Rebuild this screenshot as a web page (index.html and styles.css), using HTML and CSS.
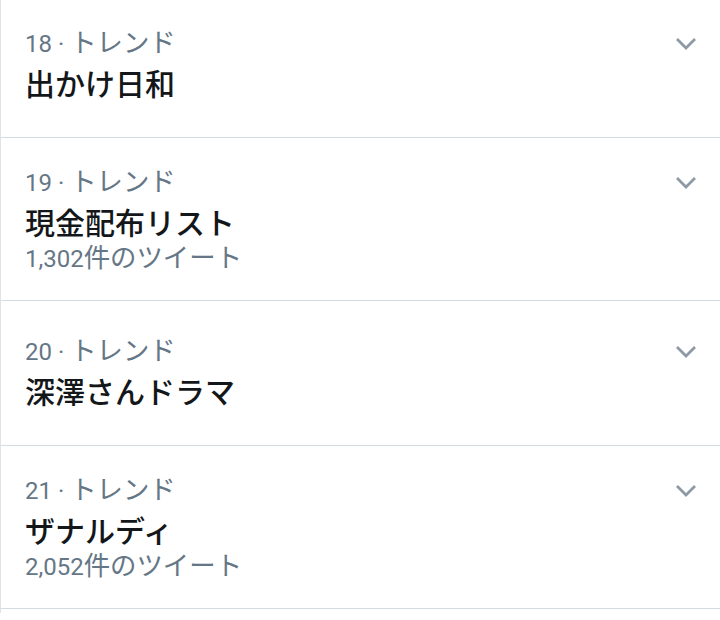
FILE: index.html
```html
<!DOCTYPE html>
<html lang="ja">
<head>
    <meta charset="UTF-8">
    <meta name="viewport" content="width=device-width, initial-scale=1.0">
    <title>トレンド</title>
    <link rel="stylesheet" href="styles.css">
</head>
<body>
    <div class="trend-list">
        <div class="trend">
            <div class="trend-meta">
                <span>18 · <span class="ja">トレンド</span></span>
                <svg class="caret" width="22" height="14" viewBox="0 0 22 14"><path d="M2 2 L11 11 L20 2"/></svg>
            </div>
            <div class="trend-name">出かけ日和</div>
        </div>

        <div class="trend">
            <div class="trend-meta">
                <span>19 · <span class="ja">トレンド</span></span>
                <svg class="caret" width="22" height="14" viewBox="0 0 22 14"><path d="M2 2 L11 11 L20 2"/></svg>
            </div>
            <div class="trend-name">現金配布リスト</div>
            <div class="trend-count">1,302<span class="ja">件のツイート</span></div>
        </div>

        <div class="trend">
            <div class="trend-meta">
                <span>20 · <span class="ja">トレンド</span></span>
                <svg class="caret" width="22" height="14" viewBox="0 0 22 14"><path d="M2 2 L11 11 L20 2"/></svg>
            </div>
            <div class="trend-name">深澤さんドラマ</div>
        </div>

        <div class="trend">
            <div class="trend-meta">
                <span>21 · <span class="ja">トレンド</span></span>
                <svg class="caret" width="22" height="14" viewBox="0 0 22 14"><path d="M2 2 L11 11 L20 2"/></svg>
            </div>
            <div class="trend-name">ザナルディ</div>
            <div class="trend-count">2,052<span class="ja">件のツイート</span></div>
        </div>
    </div>
</body>
</html>
```

FILE: styles.css
```css
body {
    margin: 0;
    padding: 0;
    background-color: #ffffff;
    font-family: Roboto, "Noto Sans CJK JP", sans-serif;
    color: #14171a;
    overflow: hidden;
}

.trend-list {
    margin-top: -7px;
    border-left: 1px solid #dde3e8;
    min-height: 100vh;
}

/* each row: two-line rows sit at the min height, text centred */
.trend {
    display: flex;
    flex-direction: column;
    justify-content: center;
    box-sizing: border-box;
    min-height: 145px;
    padding: 28px 24px 26px 24px;
    border-bottom: 1px solid #d5dce1;
}

.trend-meta {
    display: flex;
    justify-content: space-between;
    align-items: center;
    font-size: 24px;
    line-height: 34px;
    color: #657786;
}

/* japanese glyphs run a little wider than the digits in the small lines */
.ja {
    font-size: 1.1em;
    line-height: 1;
}

.caret {
    margin-right: -1px;
    fill: none;
    stroke: #8d9aa6;
    stroke-width: 2.8;
}

.trend-name {
    margin-top: 4px;
    font-size: 30px;
    line-height: 40px;
    font-weight: 500;
}

.trend-count {
    font-size: 24px;
    line-height: 30px;
    color: #657786;
}
```
